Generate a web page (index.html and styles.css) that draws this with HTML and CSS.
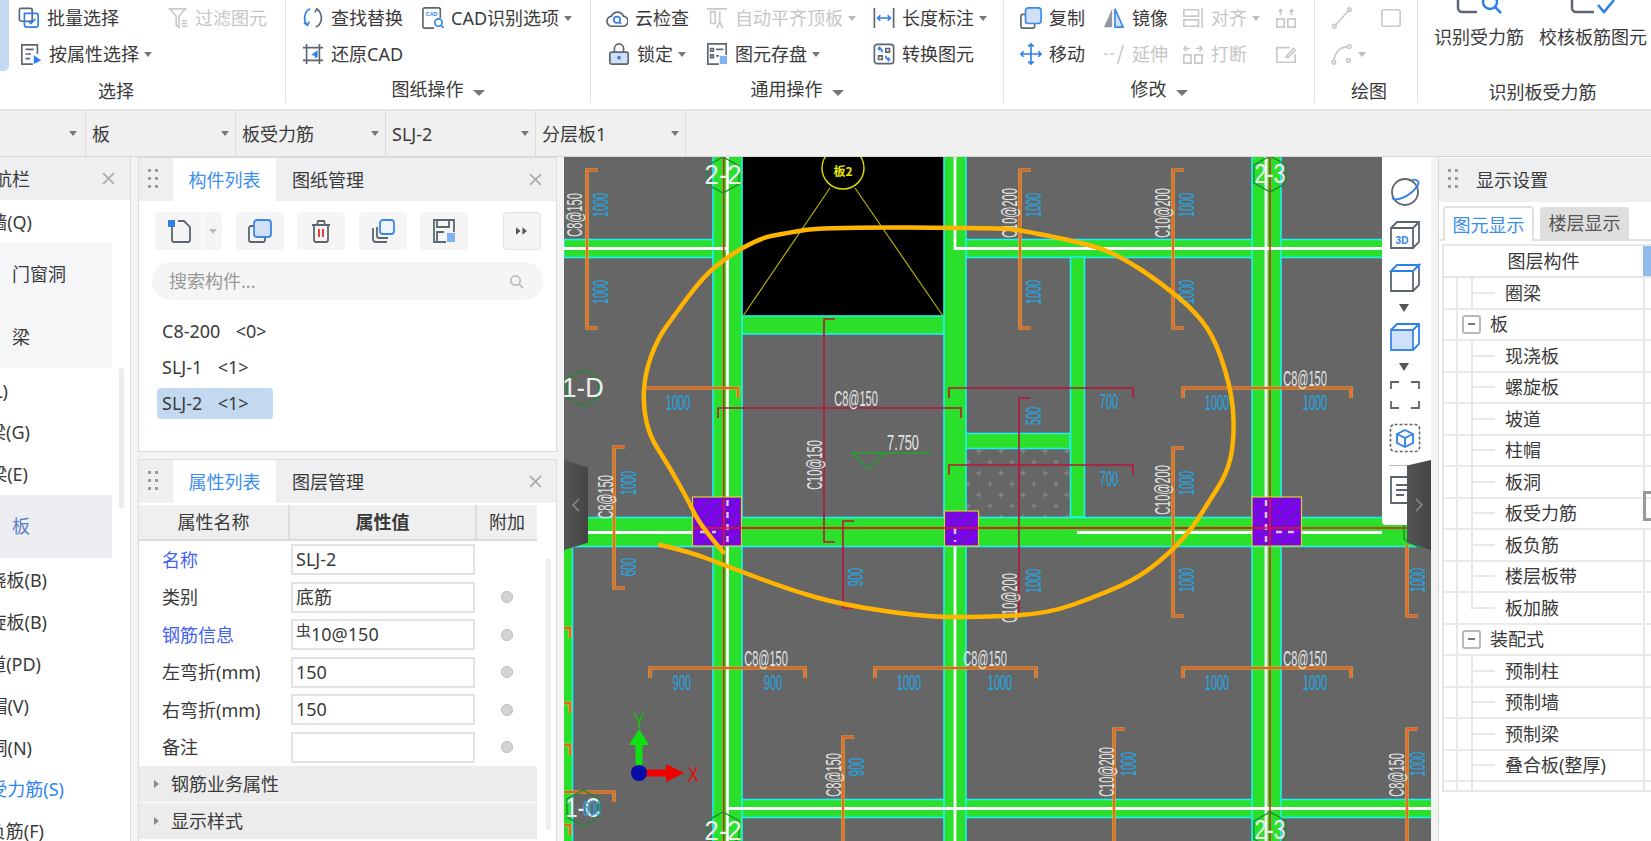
FILE: index.html
```html
<!DOCTYPE html>
<html lang="zh-CN">
<head>
<meta charset="utf-8">
<title>板受力筋</title>
<link rel="stylesheet" href="styles.css">
</head>
<body>
<header class="ribbon">
  <section class="group g1">
    <div class="accent"></div>
    <div class="gbody">
      <div class="rows r1">
        <div class="it"><svg class="ic" viewBox="0 0 24 24"><rect class="sd" x="1.500" y="1.500" width="14" height="14" rx="2"/><path class="sb" d="M7 7h13a2 2 0 0 1 2 2v10a3 3 0 0 1-3 3h-9a3 3 0 0 1-3-3zM11 15l3 3 5-5"/></svg>批量选择</div>
        <div class="it off tight"><svg class="ic" viewBox="0 0 24 24"><path class="sg" d="M2 2h17l-7 8v12l-3-2V10zM15 15h6M15 18h6M15 21h6"/></svg>过滤图元</div>
        <div class="it ind"><svg class="ic" viewBox="0 0 24 24"><path class="sd" d="M19 12V2H2v21h12M6 7h9M6 12h6M6 17h5"/><path class="fb" d="M15 13l8 6-8 4z"/></svg>按属性选择<i class="car"></i></div>
      </div>
      <div class="glabel low lb1">选择</div>
    </div>
  </section>
  <section class="group g2">
    <div class="gbody">
      <div class="rows r2">
        <div class="it"><svg class="ic" viewBox="0 0 24 24"><path class="sb" d="M9 2C2 5 1 15 6 20M2 17l4 3 2-4"/><path class="sd" d="M15 2c7 3 8 13 3 18M15 22l3-2M14 6l2-4 3 2"/></svg>查找替换</div>
        <div class="it"><svg class="ic" viewBox="0 0 24 24"><path class="sd" d="M13 23H3a2 2 0 0 1-2-2V3a2 2 0 0 1 2-2h15a2 2 0 0 1 2 2v9"/><text class="cadt" x="10.500" y="10">CAD</text><circle class="sb" cx="18" cy="17" r="4"/><path class="sb" d="M21 20l2.500 3"/></svg>CAD识别选项<i class="car"></i></div>
        <div class="it"><svg class="ic" viewBox="0 0 24 24"><path class="sd" d="M5 1v22M1 5h22M19 1v22M1 19h22"/><path class="fb" d="M17 8l-7 5 4 1v3l3-2z"/></svg>还原CAD</div>
      </div>
      <div class="glabel">图纸操作<i class="car big"></i></div>
    </div>
  </section>
  <section class="group g3">
    <div class="gbody">
      <div class="rows r3">
        <div class="it"><svg class="ic" viewBox="0 0 24 24"><path class="sd" d="M7 21a5.500 5.500 0 0 1-1-11 7 7 0 0 1 13 0 5.500 5.500 0 0 1-1 11z"/><circle class="sb" cx="12" cy="14" r="3.500"/><path class="sb" d="M14.500 16.500l2 2"/></svg>云检查</div>
        <div class="it off"><svg class="ic" viewBox="0 0 24 24"><path class="sg" d="M1 2h22M5 5h5v13H5zM15 5v10M12 23l3-7 3 7"/></svg>自动平齐顶板<i class="car lite"></i></div>
        <div class="it"><svg class="ic" viewBox="0 0 24 24"><path class="sd" d="M1.500 1v22M22.500 1v22"/><path class="sb" d="M5 12h14M8 9l-3 3 3 3M16 9l3 3-3 3"/></svg>长度标注<i class="car"></i></div>
        <div class="it ind"><svg class="ic" viewBox="0 0 24 24"><path class="sd" d="M7 10V6a5 5 0 0 1 10 0v4"/><rect class="lock" x="2" y="10" width="20" height="13" rx="2"/><circle class="fb" cx="12" cy="16" r="2"/></svg>锁定<i class="car"></i></div>
        <div class="it"><svg class="ic" viewBox="0 0 24 24"><path class="sd" d="M14 23H2V1h20v12M5 6h3v3H5zM11 7h8M5 13h3v3H5zM11 14h3"/><rect class="fb2" x="15" y="14" width="8" height="9"/></svg>图元存盘<i class="car"></i></div>
        <div class="it"><svg class="ic" viewBox="0 0 24 24"><rect class="sd" x="1.500" y="1.500" width="21" height="21" rx="3"/><path class="sd" d="M6 14h4v4H6zM14 6h4v4h-4z"/><path class="sb" d="M10 10c0-3-1-4-4-4M8 8L6 6l2-2M14 14c0 3 1 4 4 4M16 16l2 2-2 2"/></svg>转换图元</div>
      </div>
      <div class="glabel">通用操作<i class="car big"></i></div>
    </div>
  </section>
  <section class="group g4">
    <div class="gbody">
      <div class="rows r4">
        <div class="it"><svg class="ic" viewBox="0 0 24 24"><path class="sd" d="M6 8H3a2 2 0 0 0-2 2v11a2 2 0 0 0 2 2h11a2 2 0 0 0 2-2v-3"/><rect class="blk" x="6" y="1" width="17" height="17" rx="3"/></svg>复制</div>
        <div class="it"><svg class="ic" viewBox="0 0 24 24"><path class="fgy" d="M10 2L1 22h9z"/><path class="blk" d="M13 2l9 20h-9z"/></svg>镜像</div>
        <div class="it off"><svg class="ic" viewBox="0 0 24 24"><path class="sg" d="M2 3h16v7H2zM2 14h16v7H2zM22 1v22"/></svg>对齐<i class="car lite"></i></div>
        <div class="it off"><svg class="ic" viewBox="0 0 24 24"><path class="sg" d="M2 13h8v9H2zM14 13h8v9h-8zM6 9V2M4 5l2-2 2 2M18 9V2M16 5l2-2 2 2"/></svg></div>
        <div class="it"><svg class="ic" viewBox="0 0 24 24"><path class="sb" d="M12 1v22M1 12h22M9 4l3-3 3 3M9 20l3 3 3-3M4 9l-3 3 3 3M20 9l3 3-3 3"/></svg>移动</div>
        <div class="it off"><svg class="ic" viewBox="0 0 24 24"><path class="sg" d="M1 12h4M8 12h4M22 2l-6 21"/></svg>延伸</div>
        <div class="it off"><svg class="ic" viewBox="0 0 24 24"><path class="sg" d="M2 13h8v9H2zM14 13h8v9h-8zM3 6h6M21 6h-6M5 3L2 6l3 3M19 3l3 3-3 3"/></svg>打断</div>
        <div class="it off"><svg class="ic" viewBox="0 0 24 24"><path class="sg" d="M16 5H2v16h20v-9M12 15l8-9 2 2-8 8z"/></svg></div>
      </div>
      <div class="glabel">修改<i class="car big"></i></div>
    </div>
  </section>
  <section class="group g5">
    <div class="gbody">
      <div class="rows r5">
        <div class="it off"><svg class="ic" viewBox="0 0 24 24"><path class="sg" d="M4 21L20 3"/><circle class="sg" cx="3.500" cy="21" r="2"/><circle class="sg" cx="20" cy="3" r="2"/></svg></div>
        <div class="it off"><svg class="ic" viewBox="0 0 24 24"><rect class="sg" x="2" y="3" width="20" height="18" rx="2"/></svg></div>
        <div class="it off"><svg class="ic" viewBox="0 0 24 24"><path class="sg" d="M3 20C4 10 10 4 19 4"/><circle class="sg" cx="3" cy="21" r="2"/><circle class="sg" cx="20" cy="4" r="2"/><circle class="sg" cx="19" cy="19" r="2"/></svg><i class="car lite"></i></div>
      </div>
      <div class="glabel low lb5">绘图</div>
    </div>
  </section>
  <section class="group g6">
    <div class="gbody">
      <div class="rows r6">
        <div class="big-btn"><svg class="bi" viewBox="0 0 46 14"><path class="sd2" d="M2 0v8a4 4 0 0 0 4 4h15"/><circle class="sb2" cx="34" cy="2" r="7"/><path class="sb2" d="M39 7l6 6"/></svg><span>识别受力筋</span></div>
        <div class="big-btn"><svg class="bi" viewBox="0 0 46 14"><path class="sd2" d="M2 0v8a4 4 0 0 0 4 4h18"/><path class="sb2" d="M28 5l6 7L44 0"/></svg><span>校核板筋图元</span></div>
      </div>
      <div class="glabel low lb6">识别板受力筋</div>
    </div>
  </section>
</header>

<nav class="dropbar">
  <div class="dd first"><i class="car"></i></div>
  <div class="dd"><span>板</span><i class="car"></i></div>
  <div class="dd"><span>板受力筋</span><i class="car"></i></div>
  <div class="dd"><span>SLJ-2</span><i class="car"></i></div>
  <div class="dd"><span>分层板1</span><i class="car"></i></div>
</nav>

<main class="work">
  <aside class="nav">
    <div class="nhead"><div class="ni e30 hd">导航栏</div><svg class="x" viewBox="0 0 12 12"><path d="M1 1l10 10M11 1L1 11"/></svg></div>
    <div class="nq"><div class="ni e32">剪力墙(Q)</div></div>
    <div class="nblock">
      <div class="nb">门窗洞</div>
      <div class="nb">梁</div>
    </div>
    <div class="ngroup a">
      <div class="nr"><div class="ni e8">圈梁(L)</div></div>
      <div class="nr"><div class="ni e30">连梁(G)</div></div>
      <div class="nr"><div class="ni e28">暗梁(E)</div></div>
    </div>
    <div class="nb sel">板</div>
    <div class="ngroup b">
      <div class="nr2"><div class="ni e47">现浇板(B)</div></div>
      <div class="nr2"><div class="ni e47">螺旋板(B)</div></div>
      <div class="nr2"><div class="ni e41">坡道(PD)</div></div>
      <div class="nr2"><div class="ni e29">柱帽(V)</div></div>
      <div class="nr2"><div class="ni e32">板洞(N)</div></div>
      <div class="nr2"><div class="ni e64 blue">板受力筋(S)</div></div>
      <div class="nr2"><div class="ni e44">板负筋(F)</div></div>
    </div>
    <div class="nscroll"></div>
  </aside>

  <div class="midcol">
    <section class="panel list">
      <div class="phead">
        <svg class="grip" viewBox="0 0 10 20"><path d="M0 0h3v3H0zM7 0h3v3H7zM0 8h3v3H0zM7 8h3v3H7zM0 16h3v3H0zM7 16h3v3H7z"/></svg>
        <div class="tab on">构件列表</div><div class="tab">图纸管理</div>
        <svg class="x end" viewBox="0 0 12 12"><path d="M1 1l10 10M11 1L1 11"/></svg>
      </div>
      <div class="tools">
        <div class="tb split"><svg class="ti" viewBox="0 0 24 24"><path class="sd" d="M5 8v13a2 2 0 0 0 2 2h14a2 2 0 0 0 2-2V8l-6-6h-6"/><path class="fb" d="M1 1h7v7H1z"/></svg><span class="sp"><i class="car lite"></i></span></div>
        <div class="tb"><svg class="ti" viewBox="0 0 24 24"><path class="sd" d="M6 7H3a2 2 0 0 0-2 2v12a2 2 0 0 0 2 2h12a2 2 0 0 0 2-2v-3"/><rect class="blk" x="6" y="1" width="17" height="17" rx="3"/></svg></div>
        <div class="tb"><svg class="ti" viewBox="0 0 24 24"><path class="sd" d="M3 6h18M5 6v15a2 2 0 0 0 2 2h10a2 2 0 0 0 2-2V6M8 6l1-4h6l1 4"/><path class="sr" d="M10 10v8M14 10v8"/></svg></div>
        <div class="tb"><svg class="ti" viewBox="0 0 24 24"><path class="sd" d="M2 9v11a3 3 0 0 0 3 3h11M6 8v9a2 2 0 0 0 2 2h9"/><rect class="blw" x="9" y="1" width="14" height="14" rx="3"/></svg></div>
        <div class="tb"><svg class="ti" viewBox="0 0 24 24"><path class="sd" d="M14 23H2V1h20v12M5 1v7h12V1M5 23V13h7"/><rect class="fb2" x="15" y="14" width="8" height="9"/></svg></div>
        <div class="tb more"><svg class="ti2" viewBox="0 0 12 8"><path class="fd" d="M0 0l5 4-5 4zM7 0l5 4-5 4z"/></svg></div>
      </div>
      <div class="search"><span>搜索构件...</span><svg class="sic" viewBox="0 0 16 16"><circle cx="7" cy="7" r="5"/><path d="M11 11l4 4"/></svg></div>
      <ul class="clist">
        <li><span>C8-200 &nbsp;&lt;0&gt;</span></li>
        <li><span>SLJ-1 &nbsp;&lt;1&gt;</span></li>
        <li><span class="cur">SLJ-2 &nbsp;&lt;1&gt;</span></li>
      </ul>
    </section>
    <section class="panel props">
      <div class="phead">
        <svg class="grip" viewBox="0 0 10 20"><path d="M0 0h3v3H0zM7 0h3v3H7zM0 8h3v3H0zM7 8h3v3H7zM0 16h3v3H0zM7 16h3v3H7z"/></svg>
        <div class="tab on">属性列表</div><div class="tab">图层管理</div>
        <svg class="x end" viewBox="0 0 12 12"><path d="M1 1l10 10M11 1L1 11"/></svg>
      </div>
      <div class="thead"><div>属性名称</div><div class="bold">属性值</div><div>附加</div></div>
      <div class="prow"><div class="pn link">名称</div><div class="pv">SLJ-2</div><div></div></div>
      <div class="prow"><div class="pn">类别</div><div class="pv">底筋</div><div class="rad"><i></i></div></div>
      <div class="prow"><div class="pn link">钢筋信息</div><div class="pv"><span class="sym">虫</span>10@150</div><div class="rad"><i></i></div></div>
      <div class="prow"><div class="pn">左弯折(mm)</div><div class="pv">150</div><div class="rad"><i></i></div></div>
      <div class="prow"><div class="pn">右弯折(mm)</div><div class="pv">150</div><div class="rad"><i></i></div></div>
      <div class="prow"><div class="pn">备注</div><div class="pv"></div><div class="rad"><i></i></div></div>
      <div class="sect"><i></i>钢筋业务属性</div>
      <div class="sect"><i></i>显示样式</div>
      <div class="pscroll"></div>
    </section>
  </div>

  <section class="canvas">
    <svg class="cad" viewBox="564 157 867 684" width="867" height="684">
      <defs>
        <pattern id="hp" width="9" height="9" patternUnits="userSpaceOnUse" patternTransform="rotate(45)"><rect width="9" height="9" fill="#8000f0"/><rect width="1.500" height="9" fill="#4c2a9c"/></pattern>
        <pattern id="pl" width="22" height="22" patternUnits="userSpaceOnUse"><path d="M11 8v6M8 11h6" stroke="#8c8c8c" stroke-width="1"/><path d="M0 19v6M-3 22h6M22 19v6M19 22h6M0-3v6M22-3v6M19 0h6M-3 0h6" stroke="#8c8c8c" stroke-width="1"/></pattern>
        <polygon id="hex" points="0,-18 16,-9 16,9 0,18 -16,9 -16,-9"/>
        <g id="rb">
          <path d="M598 170H587V328H598"/><path d="M1031 170H1020V328H1031"/><path d="M1184 170H1173V328H1184"/>
          <path d="M625 447H614V588H625"/><path d="M1184 448H1173V616H1184"/><path d="M1418 616H1407V545"/>
          <path d="M1125 729H1114V841"/><path d="M1418 729H1407V841"/><path d="M854 737H843V841"/>
          <path d="M643 388H738V398"/><path d="M1183 398V388H1351V398"/><path d="M650 678V668H805V678"/><path d="M875 678V668H1036V678"/><path d="M1183 678V668H1351V678"/><path d="M564 792H614V802"/>
          <path d="M564 628h6v10M564 703h6v10M564 745h6v10M564 825h6v10"/>
        </g>
        <g id="neg">
          <path d="M835 319H824V542H835"/><path d="M718 418V408H961V418"/><path d="M949 398V388H1133V398"/><path d="M949 475V465H1133V475"/><path d="M1030 398H1019V615"/><path d="M854 521H843V608H854"/>
        </g>
      </defs>
      <rect x="564" y="157" width="867" height="684" fill="#666"/>
      <rect x="742" y="157" width="202" height="159" fill="#000"/>
      <rect x="966" y="448" width="104" height="69" fill="url(#pl)"/>
      <g class="beam">
        <rect x="564" y="239.500" width="149" height="18"/><rect x="966" y="239.500" width="470" height="18"/>
        <rect x="742" y="316" width="202" height="18"/>
        <rect x="742" y="799.500" width="700" height="18"/>
        <rect x="966" y="433.500" width="104" height="15"/>
        <rect x="1070.500" y="257" width="14" height="260"/>
        <rect x="560" y="546" width="12.500" height="300"/>
        <rect x="713" y="150" width="29" height="700"/>
        <rect x="944" y="150" width="22" height="700"/>
        <rect x="1252" y="150" width="29" height="700"/>
        <rect x="560" y="517.500" width="880" height="29"/>
      </g>
      <g class="wl">
        <path d="M564 248.500H727M955 157V248.500H1431M955 546V841M727.500 157V841M1266 157V841M728 808.500H1431M588 532.500H716M1077 532.500H1382"/>
      </g>
      <path class="rl" d="M723.700 157V841M1270 157V841M693 528H1407"/>
      <g class="col">
        <rect x="692.500" y="497" width="49" height="49"/><rect x="944.500" y="511" width="34" height="35"/><rect x="1252" y="497" width="49.500" height="49"/>
      </g>
      <path class="wd" d="M727.500 500V546M955 528V542M1266 500V546M700 532H716M1276 532H1300"/>
      <path class="rl" d="M693 528H1301M723.700 497V546M1270 497V546"/>
      <path class="yl" d="M830 188L743 316M855 188L943 316"/>
      <circle class="yc" cx="843" cy="168" r="21"/>
      <text class="yt" x="843" y="170">板2</text>
      <use href="#rb" class="rb1"/><use href="#rb" class="rb2"/>
      <use href="#neg" class="ng"/>
      <g class="hexes">
        <use href="#hex" x="723" y="175"/><use href="#hex" x="1270" y="174"/><use href="#hex" x="583" y="388"/><use href="#hex" x="583" y="808"/><use href="#hex" x="723" y="830"/><use href="#hex" x="1270" y="830"/><use href="#hex" x="1420" y="530"/>
      </g>
      <g class="bub">
        <text transform="matrix(.95 0 0 1 723 175)">2-2</text><text transform="matrix(.8 0 0 1 1270 174)">2-3</text><text transform="matrix(.95 0 0 1 583 388)">1-D</text><text transform="matrix(.8 0 0 1 583 808)">1-C</text><text transform="matrix(.95 0 0 1 723 831)">2-2</text><text transform="matrix(.8 0 0 1 1270 830)">2-3</text><text transform="matrix(.95 0 0 1 1414 530)">2</text>
      </g>
      <g class="w">
        <text transform="matrix(0 -.5 1 0 574 215)">C8@150</text><text transform="matrix(0 -.5 1 0 1009 213)">C10@200</text><text transform="matrix(0 -.5 1 0 1162 213)">C10@200</text>
        <text transform="matrix(0 -.5 1 0 605 497)">C8@150</text><text transform="matrix(0 -.5 1 0 1162 490)">C10@200</text><text transform="matrix(0 -.5 1 0 814 465)">C10@150</text>
        <text transform="matrix(0 -.5 1 0 1009 598)">C10@200</text><text transform="matrix(0 -.5 1 0 1106 772)">C10@200</text><text transform="matrix(0 -.5 1 0 1396 775)">C8@150</text><text transform="matrix(0 -.5 1 0 833 775)">C8@150</text>
        <text transform="matrix(.5 0 0 1 856 398)">C8@150</text><text transform="matrix(.5 0 0 1 1305 378)">C8@150</text><text transform="matrix(.5 0 0 1 766 658)">C8@150</text><text transform="matrix(.5 0 0 1 985 658)">C8@150</text><text transform="matrix(.5 0 0 1 1305 658)">C8@150</text>
        <text transform="matrix(.58 0 0 1 903 443)">7.750</text>
      </g>
      <g class="b">
        <text transform="matrix(0 -.5 1 0 600 205)">1000</text><text transform="matrix(0 -.5 1 0 600 292)">1000</text><text transform="matrix(0 -.5 1 0 1033 205)">1000</text><text transform="matrix(0 -.5 1 0 1033 292)">1000</text><text transform="matrix(0 -.5 1 0 1186 205)">1000</text><text transform="matrix(0 -.5 1 0 1186 292)">1000</text>
        <text transform="matrix(0 -.5 1 0 628 483)">1000</text><text transform="matrix(0 -.5 1 0 628 567)">600</text><text transform="matrix(0 -.5 1 0 1186 483)">1000</text><text transform="matrix(0 -.5 1 0 1186 580)">1000</text><text transform="matrix(0 -.5 1 0 1033 581)">1000</text><text transform="matrix(0 -.5 1 0 1417 580)">1000</text>
        <text transform="matrix(0 -.5 1 0 1033 416)">500</text><text transform="matrix(0 -.5 1 0 855 577)">900</text><text transform="matrix(0 -.5 1 0 856 767)">900</text><text transform="matrix(0 -.5 1 0 1128 764)">1000</text><text transform="matrix(0 -.5 1 0 1417 764)">1000</text>
        <text transform="matrix(.5 0 0 1 678 402)">1000</text><text transform="matrix(.5 0 0 1 1217 402)">1000</text><text transform="matrix(.5 0 0 1 1315 402)">1000</text><text transform="matrix(.5 0 0 1 1109 401)">700</text><text transform="matrix(.5 0 0 1 1109 478)">700</text>
        <text transform="matrix(.5 0 0 1 682 682)">900</text><text transform="matrix(.5 0 0 1 773 682)">900</text><text transform="matrix(.5 0 0 1 909 682)">1000</text><text transform="matrix(.5 0 0 1 1000 682)">1000</text><text transform="matrix(.5 0 0 1 1217 682)">1000</text><text transform="matrix(.5 0 0 1 1315 682)">1000</text><text transform="matrix(.5 0 0 1 592 808)">600</text>
      </g>
      <path class="lv" d="M852 453H931M852 453L868 469L885 453"/>
      <g class="triad">
        <path class="ay" d="M635.500 773V745H629L639 729L649 745H642.500V773z"/>
        <path class="ax" d="M646 769.500H666V764L684 773L666 782V776.500H646z"/>
        <circle class="ao" cx="639" cy="773" r="8"/>
        <text class="ty" transform="matrix(.8 0 0 1 639 720)">Y</text>
        <text class="tx" transform="matrix(.8 0 0 1 693 774)">X</text>
      </g>
      <path class="anno" d="M723 552Q700 525 694 512.500Q688 500 677.500 481.500Q667 463 658.500 450Q650 437 646.500 422Q643 407 644 390Q645 373 651 356.500Q657 340 665 328.500Q673 317 688 297Q703 277 715 267Q727 257 743.500 247.500Q760 238 773.500 235.500Q787 233 805 230Q823 227 911 227.500Q1000 228 1010 229Q1020 230 1056 237.500Q1093 245 1108 251.500Q1123 258 1141.500 270Q1160 282 1178.500 297.500Q1197 313 1207 328Q1217 343 1225 370Q1233 397 1233.500 420Q1234 443 1230.500 458Q1227 473 1218.500 486.500Q1210 500 1201.500 513.500Q1193 527 1183 538.500Q1173 550 1156.500 563.500Q1140 577 1120 586Q1100 595 1073.500 604.500Q1047 614 1013.500 615.500Q980 617 953.500 617Q927 617 885 611Q843 605 815 597Q787 589 757 577.500Q727 566 707 558.500Q687 551 660 545"/>
    </svg>
    <div class="strip">
      <svg class="si" viewBox="0 0 32 30"><circle class="sd" cx="16" cy="15" r="13"/><path class="sb" d="M3 21C8 25 22 19 29 8 31 4 27 2 23 3"/></svg>
      <svg class="si m13" viewBox="0 0 32 30"><path class="sd" d="M2 8h22v20H2zM2 8l6-6h22v20l-6 6M24 8l6-6"/><text class="t3d" x="13" y="24">3D</text></svg>
      <svg class="si m13" viewBox="0 0 32 30"><path class="sd" d="M2 8v20h22V8M24 28l6-6V8"/><path class="sb" d="M2 8l6-6h22l-6 6zM24 8l6-6v6"/></svg>
      <i class="dn m11"></i>
      <svg class="si m10" viewBox="0 0 32 30"><path class="blk" d="M2 8h22v20H2z"/><path class="sb" d="M2 8l6-6h22v20l-6 6M24 8l6-6"/></svg>
      <i class="dn m11"></i>
      <svg class="si m9" viewBox="0 0 32 30"><path class="sd" d="M2 9V2h8M22 2h8v7M2 21v7h8M22 28h8v-7"/></svg>
      <svg class="si m13" viewBox="0 0 32 30"><rect class="dash" x="1.500" y="1.500" width="29" height="27" rx="4"/><path class="sb" d="M16 7l8 4v9l-8 4-8-4v-9zM8 11l8 4 8-4M16 15v9"/></svg>
      <i class="sep m12"></i>
      <svg class="si m9" viewBox="0 0 32 30"><path class="sd" d="M2 2h24v26H2zM7 10h12M7 15h12M7 20h8"/></svg>
    </div>
    <div class="fold left"><svg viewBox="0 0 10 14"><path d="M8 1L2 7l6 6"/></svg></div>
    <div class="fold right"><svg viewBox="0 0 10 14"><path d="M2 1l6 6-6 6"/></svg></div>
  </section>

  <aside class="disp">
    <div class="phead dh">
      <svg class="grip" viewBox="0 0 10 20"><path d="M0 0h3v3H0zM7 0h3v3H7zM0 8h3v3H0zM7 8h3v3H7zM0 16h3v3H0zM7 16h3v3H7z"/></svg>
      <div class="dtitle">显示设置</div>
    </div>
    <div class="dtabs"><div class="dt on">图元显示</div><div class="dt">楼层显示</div></div>
    <div class="tree">
      <div class="th"><div>图层构件</div><div class="thb"></div></div>
      <div class="tr ch"><div>圈梁</div><div></div></div>
      <div class="tr top"><div><span class="box"></span>板</div><div></div></div>
      <div class="tr ch"><div>现浇板</div><div></div></div>
      <div class="tr ch"><div>螺旋板</div><div></div></div>
      <div class="tr ch"><div>坡道</div><div></div></div>
      <div class="tr ch"><div>柱帽</div><div></div></div>
      <div class="tr ch"><div>板洞</div><div></div></div>
      <div class="tr ch"><div>板受力筋</div><div class="chk"></div></div>
      <div class="tr ch"><div>板负筋</div><div></div></div>
      <div class="tr ch"><div>楼层板带</div><div></div></div>
      <div class="tr ch last"><div>板加腋</div><div></div></div>
      <div class="tr top"><div><span class="box"></span>装配式</div><div></div></div>
      <div class="tr ch"><div>预制柱</div><div></div></div>
      <div class="tr ch"><div>预制墙</div><div></div></div>
      <div class="tr ch"><div>预制梁</div><div></div></div>
      <div class="tr ch"><div>叠合板(整厚)</div><div></div></div>
      <div class="tr tail"><div></div><div></div></div>
    </div>
  </aside>
</main>
</body>
</html>
```

FILE: styles.css
```css
* { box-sizing: border-box; }
html, body { margin: 0; padding: 0; }
body {
  width: 1651px; height: 841px; overflow: hidden; background: #f3f3f3; color: #3a3a3a;
  font: 18px/24px "Noto Sans", "Noto Sans CJK SC", sans-serif;
}
i { font-style: normal; }

/* shared icon strokes */
.sd, .sb, .sg, .sd2, .sb2 { fill: none; stroke-width: 1.800; }
.sd { stroke: #5c6570; } .sb { stroke: #2f7fe8; } .sg { stroke: #c9c9c9; }
.sd2 { stroke: #5c6570; stroke-width: 2.500; } .sb2 { stroke: #2f7fe8; stroke-width: 2.500; }
.sr { fill: none; stroke: #ee2a2a; stroke-width: 1.800; }
.fb { fill: #2f7fe8; } .fb2 { fill: #7fb2f0; } .fd { fill: #555; } .fgy { fill: #8f98a3; }
.blk { fill: #cfe0f8; stroke: #3c88ea; stroke-width: 1.800; }
.blw { fill: #eef5fe; stroke: #3c88ea; stroke-width: 1.800; }
.lock { fill: #cfe0f8; stroke: #5c6570; stroke-width: 1.800; }
.cadt { font: 700 6px "Liberation Sans", sans-serif; fill: #2f7fe8; text-anchor: middle; }

/* ribbon */
.ribbon { display: flex; height: 111px; background: #fff; border-bottom: 2px solid #e3e3e3; }
.group { display: flex; height: 103px; border-right: 1px solid #e3e3e3; }
.g1 { width: 286px; } .g2 { width: 305px; } .g3 { width: 413px; } .g4 { width: 311px; } .g5 { width: 103px; } .g6 { flex: 1; border-right: 0; }
.accent { width: 9px; height: 71px; background: #c3d9f2; border-radius: 0 0 5px 0; }
.gbody { flex: 1; display: flex; flex-direction: column; }
.rows { display: grid; height: 74px; grid-template-rows: 36px 36px; }
.r1 { padding-left: 9px; grid-template-columns: 150px 1fr; }
.r2 { padding-left: 16px; grid-template-columns: 120px 1fr; }
.r3 { padding-left: 15px; grid-template-columns: 100px 167px 1fr; }
.r4 { padding-left: 16px; grid-template-columns: 83px 79px 93px 1fr; }
.r5 { padding-left: 16px; grid-template-columns: 49px 1fr; }
.r6 { padding-left: 16px; grid-template-columns: 105px 1fr; grid-template-rows: 74px; }
.it { display: flex; align-items: center; gap: 7px; white-space: nowrap; }
.it.tight { gap: 5px; }
.it.ind { padding-left: 2px; }
.off { color: #c6c6c6; }
.ic { width: 22px; height: 22px; flex: none; }
.car { display: inline-block; width: 0; height: 0; margin-left: 7px; border-style: solid; border-width: 5px 4px 0; border-color: #777 transparent transparent; }
.it .car { margin-left: -2px; }
.car.big { margin-left: 9px; border-width: 6px 6px 0; }
.car.lite { border-top-color: #bbb; }
.glabel { text-align: center; padding-top: 3px; white-space: nowrap; }
.glabel.low { padding-top: 6px; }
.lb1 { padding-right: 62px; }
.lb5 { padding-left: 6px; }
.lb6 { padding-left: 16px; }
.big-btn { display: flex; flex-direction: column; align-items: center; white-space: nowrap; width: max-content; }
.bi { width: 46px; height: 14px; flex: none; margin-bottom: 11px; }

/* dropdown bar */
.dropbar { display: flex; height: 46px; background: #f0f0f0; border-bottom: 1px solid #d8d8d8; }
.dd { width: 150px; display: flex; align-items: center; justify-content: space-between; padding: 0 6px 0 6px; border-right: 1px solid #dcdcdc; }
.dd.first { width: 86px; justify-content: flex-end; padding-right: 8px; }
.dd .car { margin: 0; }

/* layout */
.work { display: flex; height: 684px; }
.nav { position: relative; width: 131px; flex: none; background: #fff; border-right: 1px solid #dcdcdc; overflow: hidden; }
.midcol { width: 419px; flex: none; margin-left: 7px; display: flex; flex-direction: column; gap: 6px; }
.canvas { position: relative; width: 867px; flex: none; margin-left: 7px; overflow: hidden; }
.cad { display: block; }
.disp { width: 213px; flex: none; margin-left: 7px; background: #fff; border-left: 1px solid #d8d8d8; overflow: hidden; }

/* left nav */
.nhead { display: flex; align-items: center; justify-content: space-between; height: 43px; background: #eeeff1; padding-right: 15px; }
.x { width: 13px; height: 13px; flex: none; fill: none; stroke: #aaa; stroke-width: 1.500; }
.ni { display: flex; justify-content: flex-end; overflow: hidden; white-space: nowrap; }
.e8 { width: 8px; } .e28 { width: 28px; } .e29 { width: 29px; } .e30 { width: 30px; } .e32 { width: 32px; } .e41 { width: 41px; } .e44 { width: 44px; } .e47 { width: 47px; } .e64 { width: 64px; }
.ni.blue { color: #2f84ee; }
.nq { height: 43px; display: flex; align-items: center; }
.nblock { width: 112px; background: #f5f6f8; }
.nb { width: 112px; height: 62.500px; display: flex; align-items: center; padding-left: 12px; }
.nb.sel { height: 63px; background: #eceef2; color: #5a80c8; }
.ngroup.a { margin-top: 2px; }
.ngroup.b { margin-top: 2px; }
.nr { height: 41.500px; display: flex; align-items: center; }
.nr2 { height: 41.800px; display: flex; align-items: center; }
.nscroll { position: absolute; left: 119px; top: 211px; width: 5px; height: 140px; background: #ececec; border-radius: 3px; }

/* panels */
.panel { position: relative; background: #fff; border: 1px solid #dcdcdc; }
.panel.list { height: 295px; }
.panel.props { flex: 1; margin-top: 1px; border-bottom: 0; overflow: hidden; }
.phead { display: flex; align-items: stretch; height: 43px; background: #eeeff1; }
.grip { width: 10px; height: 20px; flex: none; margin: 11px 11px 0 9px; fill: #9a9a9a; }
.tab { padding: 0 16px; display: flex; align-items: center; white-space: nowrap; }
.tab.on { width: 103px; justify-content: center; padding: 0; margin-left: 4px; background: #fff; color: #3b8ef0; }
.x.end { margin: 15px 14px 0 auto; }
.tools { display: flex; gap: 13.500px; padding: 11px 0 0 16px; height: 49px; }
.tb { width: 48px; height: 38px; display: flex; align-items: center; justify-content: center; background: #f5f5f5; border-radius: 4px; }
.tb.split { width: 67px; justify-content: flex-start; padding-left: 12px; }
.sp { display: flex; align-items: center; justify-content: center; margin-left: 12px; width: 19px; height: 38px; border-left: 1px solid #fff; }
.sp .car { margin: 0; }
.tb.more { width: 38px; margin-left: 21px; border: 1px solid #e2e2e2; }
.ti { width: 24px; height: 24px; }
.ti2 { width: 11px; height: 8px; }
.search { display: flex; align-items: center; justify-content: space-between; width: 391px; height: 38px; margin: 12px 0 0 13px; padding: 0 19px 0 17px; background: #f5f5f5; border-radius: 19px; color: #999; }
.sic { width: 15px; height: 15px; fill: none; stroke: #bbb; stroke-width: 1.800; }
.clist { list-style: none; margin: 13px 0 0; padding: 0; }
.clist li { height: 36px; display: flex; align-items: center; padding-left: 18px; font-size: 18px; word-spacing: 3px; }
.clist span { width: 116px; height: 31px; line-height: 31px; padding-left: 5px; border-radius: 4px; white-space: nowrap; }
.clist .cur { background: #c3d9f0; }

/* property table */
.thead, .prow { display: grid; grid-template-columns: 151px 187px 60px; width: 398px; }
.thead { height: 36px; margin-top: 2px; background: #efefef; border-bottom: 2px solid #dcdcdc; }
.thead div { display: flex; align-items: center; justify-content: center; border-right: 2px solid #dcdcdc; }
.thead div:last-child { border-right: 0; }
.bold { font-weight: 700; }
.prow { height: 37.500px; align-items: center; }
.pn { padding-left: 23px; white-space: nowrap; }
.link { color: #3f62ee; }
.pv { width: 184px; height: 31px; margin-left: 1px; border: 2px solid #e2e2e2; padding-left: 3px; line-height: 26px; white-space: nowrap; }
.sym { display: inline-block; font-size: 15px; line-height: 15px; vertical-align: 5px; }
.rad { display: flex; justify-content: center; }
.rad i { width: 12px; height: 12px; border-radius: 50%; background: #d4d4d4; border: 1px solid #bbb; }
.sect { display: flex; align-items: center; width: 398px; height: 36px; margin-bottom: 1px; background: #ececec; padding-left: 15px; }
.sect i { width: 0; height: 0; margin-right: 12px; border-style: solid; border-width: 4px 0 4px 5px; border-color: transparent transparent transparent #888; }
.pscroll { position: absolute; left: 407px; top: 98px; width: 5px; height: 272px; background: #eeeeee; border-radius: 3px; }

/* CAD drawing */
.beam rect { fill: #2be02b; stroke: #1cf0f0; stroke-width: 1.600; }
.wl path { fill: none; stroke: #fff; stroke-width: 2.800; }
.wd { fill: none; stroke: #fff; stroke-width: 2.500; stroke-dasharray: 6 6; opacity: .75; }
.rl { fill: none; stroke: #e41a10; stroke-width: 1.500; }
.col rect { fill: url(#hp); stroke: #d8d820; stroke-width: 1.200; }
.yl { fill: none; stroke: #b0b000; stroke-width: 1.200; }
.yc { fill: none; stroke: #d8d800; stroke-width: 1.500; }
.yt { font: 700 12px "Noto Sans CJK SC", sans-serif; fill: #e8e800; text-anchor: middle; dominant-baseline: central; }
.rb1 { fill: none; stroke: #f0b02c; stroke-width: 3.200; }
.rb2 { fill: none; stroke: #e0482a; stroke-width: 1.300; }
.ng { fill: none; stroke: #b8143c; stroke-width: 1.600; }
.hexes use { fill: none; stroke: #1b8a2e; stroke-width: 1.300; }
.bub text { font: 27px "Liberation Sans", sans-serif; fill: #eeeeee; text-anchor: middle; dominant-baseline: central; }
.w text { font: 22px "Liberation Sans", sans-serif; fill: #e4e4e4; text-anchor: middle; dominant-baseline: central; }
.b text { font: 22px "Liberation Sans", sans-serif; fill: #1ea8e8; text-anchor: middle; dominant-baseline: central; }
.lv { fill: none; stroke: #1fa52a; stroke-width: 1.500; }
.ay { fill: #10e010; } .ax { fill: #f00000; } .ao { fill: #0a0aa8; }
.ty, .tx { font: 22px "Liberation Sans", sans-serif; text-anchor: middle; dominant-baseline: central; }
.ty { fill: #10c010; } .tx { fill: #e01010; }
.anno { fill: none; stroke: #ffb400; stroke-width: 4.500; stroke-linejoin: round; stroke-linecap: round; }

/* canvas overlays */
.strip { position: absolute; right: 0; top: 0; width: 49px; height: 368px; padding: 20px 0 0 7px; background: #fff; border-radius: 0 0 0 4px; display: flex; flex-direction: column; align-items: flex-start; }
.si { width: 32px; height: 30px; flex: none; }
.t3d { font: 700 10px "Liberation Sans", sans-serif; fill: #2f7fe8; text-anchor: middle; }
.dn { width: 0; height: 0; margin-left: 10px; border-style: solid; border-width: 8px 5px 0; border-color: #555 transparent transparent; }
.dash { fill: none; stroke: #666; stroke-width: 1.600; stroke-dasharray: 3 2; }
.sep { width: 28px; height: 1px; background: #bbb; }
.m9 { margin-top: 9px; } .m10 { margin-top: 10px; } .m11 { margin-top: 11px; } .m12 { margin-top: 12px; } .m13 { margin-top: 13px; }
.fold { position: absolute; top: 303px; width: 24px; height: 90px; display: flex; align-items: center; justify-content: center; background: linear-gradient(90deg, #555, #444); }
.fold svg { width: 10px; height: 14px; fill: none; stroke: #888; stroke-width: 1.500; }
.fold.left { left: 0; border-radius: 0 0 4px 0; clip-path: polygon(0 0, 100% 8%, 100% 92%, 0 100%); }
.fold.right { right: 0; border-radius: 4px 0 0 0; clip-path: polygon(0 6%, 100% 0, 100% 100%, 0 92%); }

/* display settings */
.dh { margin-top: 1px; height: 44px; }
.dtitle { display: flex; align-items: center; margin-left: 7px; }
.dtabs { display: flex; align-items: flex-end; gap: 6px; height: 39px; padding-left: 4px; border-bottom: 2px solid #e0e0e0; }
.dt { width: 89px; height: 32px; display: flex; align-items: center; justify-content: center; background: #dedede; color: #555; border-radius: 4px 4px 0 0; }
.dt.on { width: 91px; height: 35px; margin-bottom: -2px; background: #fff; color: #3b8ef0; border: 2px solid #e0e0e0; border-bottom: 0; }
.tree { margin: 3px 0 0 3px; width: 240px; border: 2px solid #e6e6e6; border-width: 2px 0 2px 2px; }
.th, .tr { display: grid; grid-template-columns: 199px 1fr; }
.th { height: 32px; border-bottom: 2px solid #e6e6e6; }
.th div:first-child { display: flex; align-items: center; justify-content: center; }
.thb { background: #90bbec; }
.tr { height: 31.500px; border-bottom: 2px solid #eaeaea; }
.tr > div:last-child { border-left: 2px solid #e6e6e6; }
.tr > div:first-child { display: flex; align-items: center; white-space: nowrap; background-repeat: no-repeat; }
.ch > div:first-child, .tail > div:first-child {
  padding-left: 61px;
  background-image: linear-gradient(#e8e8e8, #e8e8e8), linear-gradient(#e8e8e8, #e8e8e8), linear-gradient(#e8e8e8, #e8e8e8);
  background-size: 2px 100%, 2px 100%, 24px 2px;
  background-position: 12px 0, 27px 0, 27px 50%;
}
.last > div:first-child { background-size: 2px 100%, 2px 50%, 24px 2px; }
.tail { height: 8px; border-bottom: 0; }
.tail > div:first-child { background-size: 2px 100%, 2px 100%, 0 0; }
.top > div:first-child {
  padding-left: 18px; gap: 9px;
  background-image: linear-gradient(#e8e8e8, #e8e8e8);
  background-size: 2px 100%; background-position: 12px 0;
}
.box { position: relative; width: 19px; height: 19px; flex: none; background: linear-gradient(#777, #777) center / 7px 2px no-repeat, #fff; border: 2px solid #b8b8b8; border-radius: 3px; }
.chk { border: 3px solid #999 !important; border-right: 0 !important; margin-top: -8px; height: 30px; }
```
